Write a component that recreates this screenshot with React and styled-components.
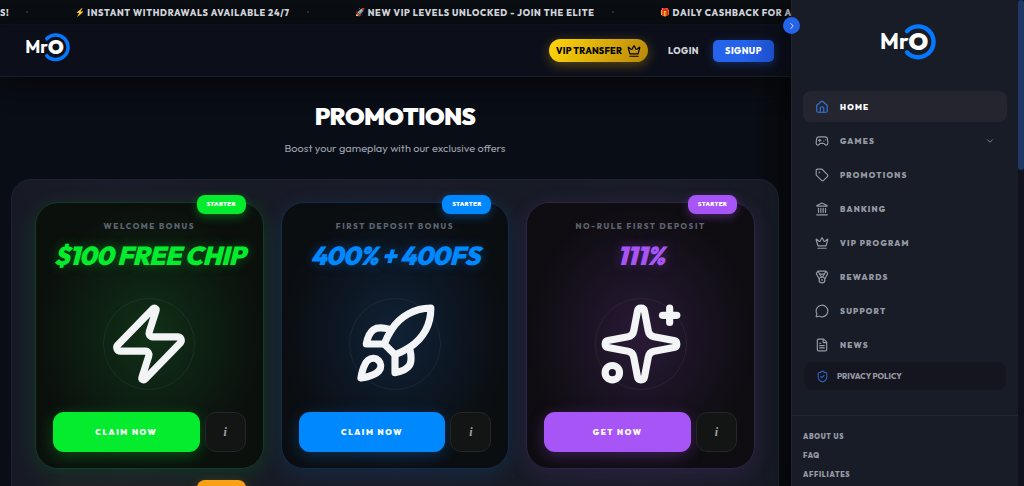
import React from "react"
import styled, { createGlobalStyle, css } from "styled-components"
import {
  ChevronDown,
  ChevronRight,
  Crown,
  FileText,
  Gamepad2,
  House,
  Landmark,
  Medal,
  MessageCircle,
  Rocket,
  ShieldCheck,
  Sparkles,
  Tag,
  Zap,
} from "lucide-react"

const GlobalStyle = createGlobalStyle`
  *, *::before, *::after {
    box-sizing: border-box;
  }

  html, body {
    margin: 0;
    background: #090d16;
    color: #fff;
    font-family: Outfit, Lato, sans-serif;
    -webkit-font-smoothing: antialiased;
  }

  button {
    font-family: inherit;
    border: 0;
    padding: 0;
    cursor: pointer;
  }

  a {
    color: inherit;
    text-decoration: none;
  }
`

const Page = styled.div`
  display: flex;
  height: 100vh;
  overflow: hidden;
`

const Content = styled.div`
  flex: 1;
  min-width: 0;
  overflow: hidden;
  background: linear-gradient(90deg, transparent calc(100% - 40px), #08090c), #090d16;
`

const Ticker = styled.div`
  display: flex;
  align-items: center;
  height: 25px;
  overflow: hidden;
  background: #0a0d12;
  border-bottom: 1px solid #11151f;
  white-space: nowrap;
`

const TickerItem = styled.span`
  flex: none;
  display: flex;
  align-items: center;
  gap: 2px;
  padding-right: 17px;
  color: #d1d5db;
  font-size: 9px;
  font-weight: 800;
  letter-spacing: 0.075em;
`

const TickerIcon = styled.span`
  font-family: "Noto Color Emoji", sans-serif;
  font-size: 8px;
  letter-spacing: 0;
`

const TickerDot = styled.i`
  flex: none;
  width: 2px;
  height: 2px;
  margin-right: 47px;
  border-radius: 50%;
  background: #353941;
`

const Header = styled.header`
  display: flex;
  align-items: center;
  justify-content: space-between;
  height: 52px;
  padding: 0 17px 0 26px;
  background: #0c0f1a;
  border-bottom: 1px solid #1b1e29;
  box-shadow: 0 8px 24px rgba(8, 8, 9, 0.9);
`

const HeaderLogo = styled.a`
  display: flex;
  padding-bottom: 6px;
`

const Actions = styled.div`
  display: flex;
  align-items: center;
`

const VipButton = styled.button`
  display: flex;
  align-items: center;
  justify-content: space-between;
  width: 99px;
  height: 23px;
  padding: 0 7px;
  border-radius: 12px;
  background: linear-gradient(120deg, #ffd60a, #b8860b);
  box-shadow: 0 3px 12px rgba(234, 179, 8, 0.35);
  color: #000;
  font-size: 9px;
  font-weight: 800;
  letter-spacing: 0.025em;
  white-space: nowrap;
`

const LoginButton = styled.button`
  width: 65px;
  padding-left: 6px;
  background: none;
  color: #d1d5db;
  font-size: 9px;
  font-weight: 800;
  letter-spacing: 0.05em;
`

const SignupButton = styled.button`
  width: 61px;
  height: 22px;
  border-radius: 5px;
  background: linear-gradient(100deg, #2563eb 50%, #1d4fcb);
  box-shadow: 0 2px 10px rgba(37, 99, 235, 0.35);
  color: #fff;
  font-size: 9px;
  font-weight: 800;
  letter-spacing: 0.05em;
`

const Main = styled.main`
  padding: 25px 12px 0 11px;
`

const Title = styled.h1`
  margin: 0;
  text-align: center;
  font-size: 24px;
  line-height: 28px;
  font-weight: 900;
  letter-spacing: -0.025em;
`

const Subtitle = styled.p`
  margin: 10px 0 22px;
  color: #9ca0ab;
  text-align: center;
  font-size: 11px;
  line-height: 17px;
  font-weight: 400;
`

const Offers = styled.section`
  display: grid;
  grid-template-columns: repeat(3, 1fr);
  gap: 18px 17px;
  padding: 22px 23px 40px;
  border: 1px solid #1f232d;
  border-radius: 20px;
  background: linear-gradient(90deg, #171a25, #1b1c29 15%, #171b25 31%, #1b1c29 50%, #171b25 66%, #1b1c29 82%, #161a23);
`

const Card = styled.article`
  --accent: ${props => props.$color};
  position: relative;
  display: flex;
  flex-direction: column;
  align-items: center;
  min-width: 0;
  height: 267px;
  padding: 17px 17px 0;
  border: 1px solid color-mix(in srgb, var(--accent) 16%, #171b25);
  border-radius: 23px;
  background: radial-gradient(
      ellipse closest-side at 50% 50%,
      color-mix(in srgb, var(--accent) 15%, #131013),
      color-mix(in srgb, var(--accent) 9%, #0e0d10) 45%,
      color-mix(in srgb, var(--accent) 2%, #0b0b0c) 100%
    );
  box-shadow: 0 5px 22px color-mix(in srgb, var(--accent) 13%, transparent);
`

const Badge = styled.span`
  position: absolute;
  top: -8px;
  right: 17px;
  width: 49px;
  height: 19px;
  border-radius: 8px;
  background: var(--accent);
  box-shadow: 0 3px 10px color-mix(in srgb, var(--accent) 35%, transparent);
  color: #fff;
  font-size: 6px;
  line-height: 19px;
  font-weight: 900;
  letter-spacing: 0.05em;
  text-align: center;
`

const CardLabel = styled.p`
  margin: 0;
  color: #5e646f;
  font-size: 8px;
  line-height: 12px;
  font-weight: 800;
  letter-spacing: 0.2em;
  white-space: nowrap;
`

const CardTitle = styled.h2`
  margin: 8px 0 0;
  color: var(--accent);
  font-size: 26px;
  line-height: 32px;
  font-style: italic;
  font-weight: 900;
  letter-spacing: -0.025em;
  text-shadow: 0 0 12px color-mix(in srgb, var(--accent) 35%, transparent);
  white-space: nowrap;
`

const Emblem = styled.div`
  display: grid;
  place-items: center;
  flex: none;
  width: 92px;
  height: 92px;
  margin-top: 26px;
  border: 1px solid rgba(255, 255, 255, 0.06);
  border-radius: 50%;
  color: #f3f4f6;
`

const CardActions = styled.div`
  display: flex;
  gap: 5px;
  align-self: stretch;
  margin-top: 22px;
`

const ClaimButton = styled.button`
  flex: 1;
  height: 40px;
  border-radius: 11px;
  background: var(--accent);
  box-shadow: 0 4px 16px color-mix(in srgb, var(--accent) 28%, transparent);
  color: #fff;
  font-size: 8px;
  font-weight: 900;
  letter-spacing: 0.2em;
`

const InfoButton = styled.button`
  width: 41px;
  height: 40px;
  border: 1px solid #242628;
  border-radius: 11px;
  background: #131414;
  color: #9ca3af;
  font-family: "Liberation Serif", serif;
  font-size: 12px;
  font-style: italic;
  font-weight: 700;
`

const Sidebar = styled.aside`
  position: relative;
  flex: none;
  display: flex;
  width: 233px;
  height: 100vh;
  background: #181c26;
  border-left: 1px solid #20242f;
  box-shadow: -6px 0 18px rgba(0, 0, 0, 0.4);
`

const SidebarBody = styled.div`
  flex: 1;
  min-width: 0;
  overflow: hidden;
`

const Collapse = styled.button`
  position: absolute;
  top: 17px;
  left: -9px;
  display: grid;
  place-items: center;
  width: 17px;
  height: 17px;
  border-radius: 50%;
  background: #2563eb;
  color: #fff;
`

const ScrollTrack = styled.div`
  flex: none;
  width: 6px;
  background: #0f121d;
`

const ScrollThumb = styled.div`
  height: 35%;
  border-radius: 3px;
  background: #203865;
`

const SidebarLogo = styled.a`
  display: flex;
  justify-content: center;
  padding: 24px 0 31px 6px;
`

const Menu = styled.nav`
  display: flex;
  flex-direction: column;
  gap: 3px;
  padding: 0 11px;
`

const itemBase = css`
  display: flex;
  align-items: center;
  padding: 0 12px;
  background: none;
  color: #9599a4;
  text-align: left;
  white-space: nowrap;
`

const MenuItem = styled.a`
  ${itemBase}
  gap: 11px;
  height: 31px;
  border-radius: 8px;
  background: ${props => (props.$active ? "#24252f" : "none")};
  color: ${props => (props.$active ? "#fff" : "#9599a4")};
  font-size: 8px;
  font-weight: 900;
  letter-spacing: 0.15em;

  svg:first-child {
    color: ${props => (props.$active ? "#3474d4" : "#9599a4")};
  }

  svg:last-child:not(:first-child) {
    margin-left: auto;
  }
`

const PolicyLink = styled.a`
  ${itemBase}
  gap: 8px;
  height: 30px;
  margin-top: -2px;
  border: 1px solid #191c25;
  border-radius: 10px;
  background: #14151e;
  font-size: 8px;
  font-weight: 800;

  svg {
    color: #2e63bd;
  }
`

const FooterLinks = styled.nav`
  display: flex;
  flex-direction: column;
  gap: 7px;
  margin-top: 24px;
  padding: 15px 11px;
  border-top: 1px solid #20252f;
  color: #9599a4;
  font-size: 7px;
  line-height: 12px;
  font-weight: 900;
  letter-spacing: 0.1em;
`

const Logo = ({ width }) => (
  <svg width={width} viewBox="0 0 55 36" role="img" aria-label="MrO">
    <path d="M26 7.2a15.4 15.4 0 1 1 0 21.2" fill="none" stroke="#0478ff" strokeWidth="4.4" strokeLinecap="round" />
    <g fill="#fff" fontWeight="800">
      <text x="-1" y="24.5" fontSize="22" fontWeight="700">
        Mr
      </text>
      <text x="37.3" y="26" fontSize="24" fontWeight="900" textAnchor="middle">
        O
      </text>
    </g>
  </svg>
)

const messages = [
  { icon: "⚡", text: "INSTANT WITHDRAWALS AVAILABLE 24/7" },
  { icon: "🚀", text: "NEW VIP LEVELS UNLOCKED - JOIN THE ELITE" },
  { icon: "🎁", text: "DAILY CASHBACK FOR ALL PLAYERS" },
]

const offers = [
  { label: "WELCOME BONUS", title: "$100 FREE CHIP", action: "CLAIM NOW", color: "#05eb2d", icon: Zap },
  { label: "FIRST DEPOSIT BONUS", title: "400% + 400FS", action: "CLAIM NOW", color: "#0088ff", icon: Rocket },
  { label: "NO-RULE FIRST DEPOSIT", title: "111%", action: "GET NOW", color: "#a855f7", icon: Sparkles },
  { label: "RELOAD BONUS", title: "200%", action: "CLAIM NOW", color: "#f9a014", icon: Crown },
]

const menu = [
  { label: "HOME", icon: House, active: true },
  { label: "GAMES", icon: Gamepad2, expandable: true },
  { label: "PROMOTIONS", icon: Tag },
  { label: "BANKING", icon: Landmark },
  { label: "VIP PROGRAM", icon: Crown },
  { label: "REWARDS", icon: Medal },
  { label: "SUPPORT", icon: MessageCircle },
  { label: "NEWS", icon: FileText },
]

const OfferCard = ({ offer }) => {
  const Icon = offer.icon
  return (
    <Card $color={offer.color}>
      <Badge>STARTER</Badge>
      <CardLabel>{offer.label}</CardLabel>
      <CardTitle>{offer.title}</CardTitle>
      <Emblem>
        <Icon size={86} strokeWidth={2} />
      </Emblem>
      <CardActions>
        <ClaimButton>{offer.action}</ClaimButton>
        <InfoButton aria-label="More information">i</InfoButton>
      </CardActions>
    </Card>
  )
}

const App = () => (
  <>
    <GlobalStyle />
    <Page>
      <Content>
        <Ticker>
          <TickerItem>S!</TickerItem>
          <TickerDot />
          {messages.map(message => (
            <React.Fragment key={message.text}>
              <TickerItem>
                <TickerIcon>{message.icon}</TickerIcon>
                {message.text}
              </TickerItem>
              <TickerDot />
            </React.Fragment>
          ))}
        </Ticker>
        <Header>
          <HeaderLogo href="#home">
            <Logo width={44} />
          </HeaderLogo>
          <Actions>
            <VipButton>
              VIP TRANSFER
              <Crown size={14} />
            </VipButton>
            <LoginButton>LOGIN</LoginButton>
            <SignupButton>SIGNUP</SignupButton>
          </Actions>
        </Header>
        <Main>
          <Title>PROMOTIONS</Title>
          <Subtitle>Boost your gameplay with our exclusive offers</Subtitle>
          <Offers>
            {offers.map(offer => (
              <OfferCard key={offer.label} offer={offer} />
            ))}
          </Offers>
        </Main>
      </Content>
      <Sidebar>
        <Collapse aria-label="Collapse menu">
          <ChevronRight size={10} />
        </Collapse>
        <SidebarBody>
          <SidebarLogo href="#home">
            <Logo width={55} />
          </SidebarLogo>
          <Menu>
            {menu.map(({ label, icon: Icon, active, expandable }) => (
              <MenuItem
                key={label}
                as={expandable ? "button" : "a"}
                href={expandable ? undefined : "#" + label.toLowerCase()}
                $active={active}
              >
                <Icon size={14} />
                {label}
                {expandable && <ChevronDown size={10} />}
              </MenuItem>
            ))}
            <PolicyLink href="#privacy">
              <ShieldCheck size={13} />
              PRIVACY POLICY
            </PolicyLink>
          </Menu>
          <FooterLinks>
            <a href="#about">ABOUT US</a>
            <a href="#faq">FAQ</a>
            <a href="#affiliates">AFFILIATES</a>
          </FooterLinks>
        </SidebarBody>
        <ScrollTrack>
          <ScrollThumb />
        </ScrollTrack>
      </Sidebar>
    </Page>
  </>
)

export default App
